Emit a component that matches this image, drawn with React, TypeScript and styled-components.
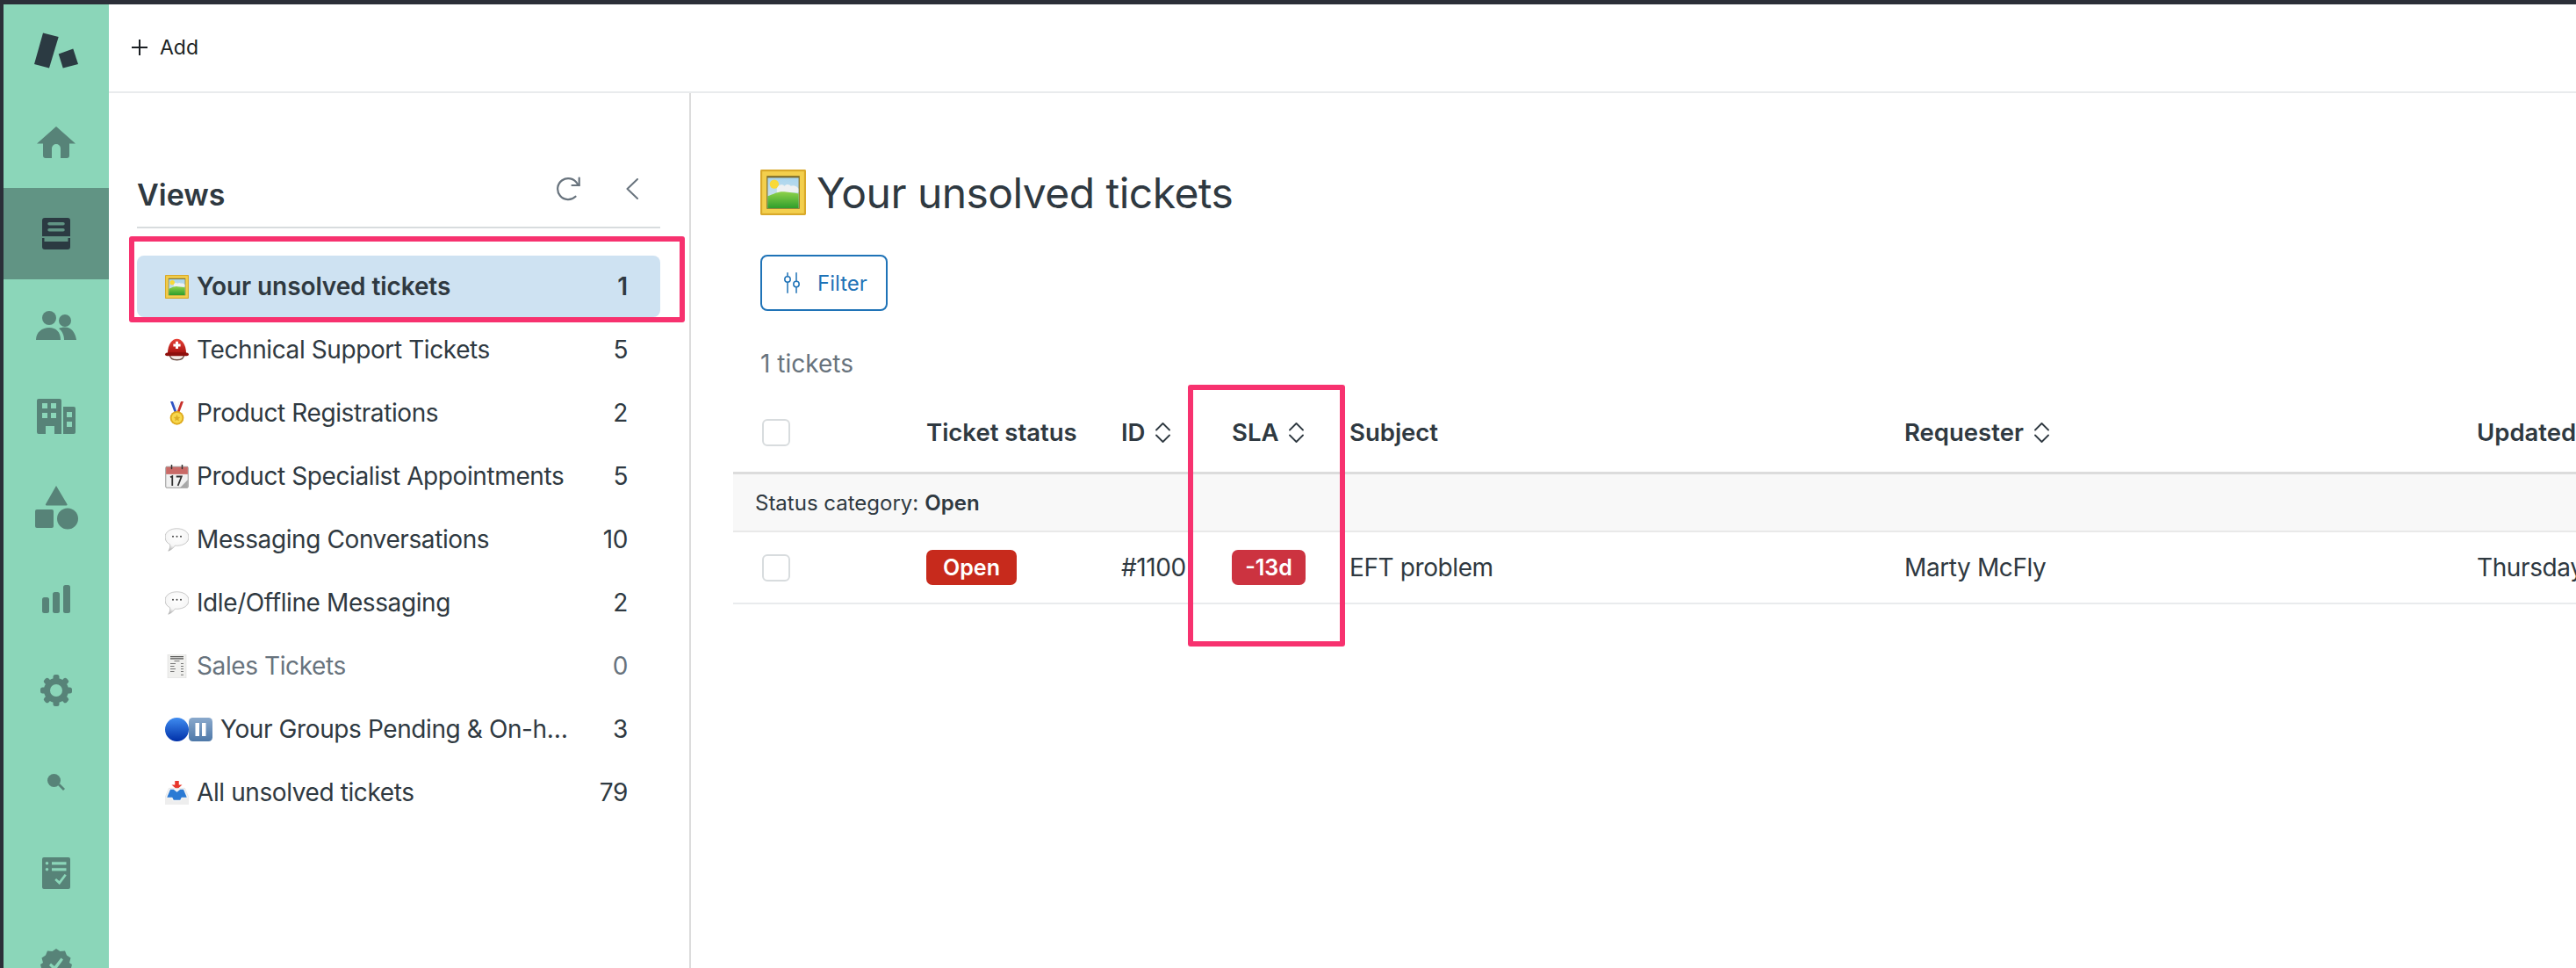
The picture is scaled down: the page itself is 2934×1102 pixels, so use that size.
import React from "react";
import styled, { createGlobalStyle } from "styled-components";

const Global = createGlobalStyle`
  html, body { margin: 0; padding: 0; background: #fff; overflow: hidden; }
  body { font-family: Inter, "Noto Sans", "Liberation Sans", sans-serif; color: #2f3941; -webkit-font-smoothing: antialiased; }
  * { box-sizing: border-box; }
`;

const Page = styled.div`
  width: 2934px; height: 1102px; display: flex; overflow: hidden;
  border-top: 5px solid #2b2f38; border-left: 4px solid #2b2f38; background: #fff;
`;
const Rail = styled.nav`
  width: 120px; flex: none; background: #8bd6b9; display: flex; flex-direction: column; color: #578378;
`;
const RailItem = styled.div<{ $active?: boolean; $logo?: boolean }>`
  height: ${(p) => (p.$logo ? 105 : 104)}px; flex: none; display: flex; align-items: center; justify-content: center;
  background: ${(p) => (p.$active ? "#619484" : "transparent")};
  color: ${(p) => (p.$logo ? "#2b3a42" : p.$active ? "#2b3a42" : "#578378")};
`;
const Content = styled.div`flex: 1; min-width: 0; display: flex; flex-direction: column;`;
const TopBar = styled.header`
  height: 101px; flex: none; display: flex; align-items: center; gap: 14px; padding: 0 0 2px 26px;
  border-bottom: 2px solid #e9ebed; font-size: 23px; font-weight: 400; color: #1b1f23;
`;
const Body = styled.div`flex: 1; min-height: 0; display: flex;`;
const Sidebar = styled.aside`
  width: 663px; flex: none; border-right: 2px solid #dcdcdc; padding: 80px 33px 0 32px;
`;
const ViewsHead = styled.div`
  height: 74px; display: flex; align-items: center; border-bottom: 2px solid #d8dcde; padding-bottom: 2px;
`;
const ViewsTitle = styled.h2`margin: 0; font-size: 34px; font-weight: 600; flex: 1; color: #2f3941;`;
const HeadIcons = styled.div`display: flex; align-items: center; gap: 52px; padding-right: 25px; color: #68737d; margin-top: -12px;`;
const ViewList = styled.div`position: relative; margin-top: 31px; display: flex; flex-direction: column; gap: 2px;`;
const ViewRow = styled.div<{ $selected?: boolean; $muted?: boolean }>`
  height: 70px; display: flex; align-items: center; padding: 0 37px 0 32px; border-radius: 8px;
  background: ${(p) => (p.$selected ? "#cee2f2" : "transparent")};
  color: ${(p) => (p.$muted ? "#68737d" : "#2f3941")};
  font-size: 28px; font-weight: ${(p) => (p.$selected ? 600 : 400)};
  letter-spacing: ${(p) => (p.$selected ? "-0.1px" : "-0.4px")};
`;
const EmojiSet = styled.span`display: flex; flex: none; margin-right: 9px;`;
const ViewName = styled.span`flex: 1; min-width: 0; white-space: nowrap; overflow: hidden; text-overflow: ellipsis;`;
const ViewCount = styled.span`width: 60px; flex: none; text-align: right;`;
const Callout = styled.div`
  position: absolute; border: 6px solid #f7326f; border-radius: 3px; pointer-events: none; z-index: 2;
`;
const SelectedCallout = styled(Callout)`left: -9px; top: -22px; width: 633px; height: 98px;`;
const SlaCallout = styled(Callout)`left: 518px; top: 6px; width: 179px; height: 298px;`;

const Main = styled.main`flex: 1; min-width: 0; overflow: hidden; padding: 81px 0 0 48px;`;
const Intro = styled.div`padding-left: 31px;`;
const Title = styled.h1`
  margin: 0; height: 64px; display: flex; align-items: center; gap: 12px;
  font-size: 48px; font-weight: 400; letter-spacing: -0.55px; color: #2f3941; white-space: nowrap;
`;
const FilterButton = styled.button`
  margin-top: 39px; width: 145px; height: 64px; display: flex; align-items: center; gap: 20px; padding: 0 0 0 25px;
  background: #fff; border: 2px solid #1f73b7; border-radius: 8px; color: #1f73b7;
  font: 400 24px Inter, sans-serif;
`;
const Count = styled.div`margin-top: 42px; height: 36px; line-height: 36px; font-size: 28px; color: #68737d;`;

const Table = styled.div`position: relative; width: 2099px;`;
const grid = `display: grid; grid-template-columns: 220px 222px 126px 134px 632px 652px 1fr; align-items: center;`;
const HeadRow = styled.div`
  ${grid} height: 108px; padding-top: 15px; border-bottom: 3px solid #dcdcdc;
  font-size: 27.5px; font-weight: 600; white-space: nowrap;
`;
const GroupRow = styled.div`
  height: 66px; display: flex; align-items: center; padding-left: 25px; background: #f8f8f8;
  border-bottom: 2px solid #e9e9e9; font-size: 24px; gap: 7px;
`;
const Strong = styled.strong`font-weight: 600;`;
const DataRow = styled.div`
  ${grid} height: 82px; border-bottom: 2px solid #e9ebed; font-size: 28px; letter-spacing: -0.4px; white-space: nowrap;
`;
const Check = styled.span`
  display: block; width: 32px; height: 31px; margin-left: 33px; border: 2px solid #d8dcde; border-radius: 6px; background: #fff;
`;
const HeadLabel = styled.span`display: flex; align-items: center; gap: 12px;`;
const Pill = styled.span<{ $bg: string; $w: number }>`
  display: flex; align-items: center; justify-content: center; height: 40px; width: ${(p) => p.$w}px;
  border-radius: 7px; background: ${(p) => p.$bg}; color: #fff; font-size: 25px; font-weight: 600; letter-spacing: 0;
`;

const Logo = () => (
  <svg width="50" height="41" viewBox="39 37 50 41" fill="currentColor">
    <path d="M49 37.5 66.7 42 56 77.5 39 73Z" />
    <path d="M66.7 61.4 83.3 55.4 89 73 71.7 77.5Z" />
  </svg>
);
const Home = () => (
  <svg width="44" height="36" viewBox="0 0 44 36" fill="currentColor">
    <path d="M22 0 44 19.5 37 19.5V33a3 3 0 0 1-3 3H27V25a5 5 0 0 0-10 0V36H10a3 3 0 0 1-3-3V19.5H0Z" />
  </svg>
);
const Inbox = () => (
  <svg width="32" height="36" viewBox="0 0 32 36" fill="currentColor" fillRule="evenodd">
    <path d="M3 0H29a3 3 0 0 1 3 3V21H0V3a3 3 0 0 1 3-3ZM8 5a1.500 1.500 0 0 0 0 3.500H24a1.500 1.500 0 0 0 0-3.500ZM8 12a1.500 1.500 0 0 0 0 3.500H24a1.500 1.500 0 0 0 0-3.500Z" />
    <path d="M0 23H2.500V27H29.500V23H32V33a3 3 0 0 1-3 3H3a3 3 0 0 1-3-3Z" />
  </svg>
);
const Users = () => (
  <svg width="46" height="33" viewBox="0 0 46 33" fill="currentColor">
    <circle cx="15" cy="8" r="8" />
    <path d="M0 33C0 24 7 19 15 19s13 5 13 14Z" />
    <circle cx="33" cy="11" r="7" />
    <path d="M26 20c2-1 4-1.500 7-1.500 7 0 12 6 13 14.500H32c0-5-2-10-6-13Z" />
  </svg>
);
const Building = () => (
  <svg width="44" height="40" viewBox="0 0 44 40" fill="currentColor" fillRule="evenodd">
    <path d="M2 0H26a2 2 0 0 1 2 2V40H20V31H10V40H2a2 2 0 0 1-2-2V2a2 2 0 0 1 2-2ZM6 5v6H12V5ZM16 5v6H22V5ZM6 16v6H12V16ZM16 16v6H22V16Z" />
    <path d="M30 9H42a2 2 0 0 1 2 2V38a2 2 0 0 1-2 2H30ZM34 15v6H40V15ZM34 26v6H40V26Z" />
  </svg>
);
const Shapes = () => (
  <svg width="49" height="50" viewBox="0 0 49 50" fill="currentColor">
    <path d="M24 0 36.500 21a1 1 0 0 1-1 1.500H13a1 1 0 0 1-1-1.500Z" />
    <rect x="0" y="27" width="21" height="21" rx="2" />
    <circle cx="37" cy="37.500" r="12" />
  </svg>
);
const Chart = () => (
  <svg width="32" height="32" viewBox="0 0 32 32" fill="currentColor">
    <rect x="0" y="14" width="8" height="18" rx="2.500" />
    <rect x="12" y="8" width="8" height="24" rx="2.500" />
    <rect x="24" y="0" width="8" height="32" rx="2.500" />
  </svg>
);
const Gear = () => (
  <svg width="36" height="36" viewBox="0 0 36 36" fill="currentColor">
    <circle cx="18" cy="18" r="10.500" fill="none" stroke="currentColor" strokeWidth="7" />
    {[0, 45, 90, 135, 180, 225, 270, 315].map((a) => (
      <rect key={a} x="14.500" y="0" width="7" height="8" rx="2.500" transform={`rotate(${a} 18 18)`} />
    ))}
  </svg>
);
const Search = () => (
  <svg width="20" height="19" viewBox="0 0 20 19" fill="currentColor">
    <circle cx="7.500" cy="7.500" r="7.500" />
    <path d="M12 13 14 11 20 17 18 19Z" />
  </svg>
);
const Checklist = () => (
  <svg width="32" height="36" viewBox="0 0 32 36" fill="currentColor" fillRule="evenodd">
    <path d="M2 0H30a2 2 0 0 1 2 2V34a2 2 0 0 1-2 2H2a2 2 0 0 1-2-2V2a2 2 0 0 1 2-2ZM5.500 5a1.800 1.800 0 1 0 0 3.600 1.800 1.800 0 0 0 0-3.600ZM5.500 12a1.800 1.800 0 1 0 0 3.600 1.800 1.800 0 0 0 0-3.600ZM11 5.200V8.400H27.500V5.200ZM11 12.200V15.400H27.500V12.200ZM27.800 20.500 25.600 19 19.500 27 16 24 14.300 26 19.800 31.300Z" />
  </svg>
);
const Badge = () => (
  <svg width="36" height="36" viewBox="0 0 36 36" fill="currentColor" fillRule="evenodd">
    <path d="M18 0 22.500 3 28 2.500 30 7.500 34.500 10.500 33 16 36 18 34.500 24 33 28 28 30 24 34 18 36 12 34 8 30 3 28 1.500 24 0 18 3 16 1.500 10.500 6 7.500 8 2.500 13.500 3ZM26 12.500 23.500 10.500 16 20 12 16.500 10 19 16.500 25.500Z" />
  </svg>
);
const Plus = () => (
  <svg width="18" height="18" viewBox="0 0 18 18" stroke="#1b1f23" strokeWidth="2" fill="none"><path d="M9 0V18M0 9H18" /></svg>
);
const Refresh = () => (
  <svg width="28" height="28" viewBox="0 0 28 28" fill="none" stroke="currentColor" strokeWidth="2.200" strokeLinecap="round" strokeLinejoin="round">
    <path d="M22.500 22.700A12 12 0 1 1 24.500 8L26.700 10" /><path d="M26.700 1.500V10H18.500" />
  </svg>
);
const ChevronLeft = () => (
  <svg width="14" height="24" viewBox="0 0 14 24" fill="none" stroke="currentColor" strokeWidth="2" strokeLinecap="round" strokeLinejoin="round"><path d="M13 1 1.500 12 13 23" /></svg>
);
const Sort = () => (
  <svg width="17" height="23" viewBox="0 0 17 23" fill="none" stroke="#2f3941" strokeWidth="1.800" strokeLinecap="round" strokeLinejoin="round" style={{ flex: "none" }}>
    <path d="M1 8.500 8.500 1 16 8.500" /><path d="M1 14.500 8.500 22 16 14.500" />
  </svg>
);
const Sliders = () => (
  <svg width="18" height="24" viewBox="0 0 18 24" fill="none" stroke="currentColor" strokeWidth="1.500" strokeLinecap="round" style={{ flex: "none" }}>
    <path d="M4 0.800V4M4 12V23.200M14 0.800V10M14 17V23.200" />
    <circle cx="4" cy="8" r="3.200" /><circle cx="14" cy="13.500" r="3.200" />
  </svg>
);

type EmojiKind = "frame" | "helmet" | "medal" | "calendar" | "bubble" | "receipt" | "circle" | "pause" | "inbox";
const Emoji = ({ kind, size = 27 }: { kind: EmojiKind; size?: number }) => {
  const uid = `${kind}-${size}`;
  return (
    <svg width={size} height={size} viewBox="0 0 36 36" style={{ flex: "none" }}>
      {kind === "frame" && (
        <>
          <defs>
            <linearGradient id={`${uid}-s`} x1="0" y1="0" x2="0" y2="1"><stop offset="0" stopColor="#a9d5ee" /><stop offset="1" stopColor="#dbe7ea" /></linearGradient>
            <linearGradient id={`${uid}-g`} x1="0" y1="0" x2="0" y2="1"><stop offset="0" stopColor="#8fd24a" /><stop offset="1" stopColor="#2f9e2c" /></linearGradient>
          </defs>
          <rect x="0" y="0" width="36" height="36" rx="1" fill="#d9a92a" />
          <rect x="1.500" y="1.500" width="33" height="33" fill="#f3cf4d" />
          <rect x="5" y="5" width="26" height="26" fill="#7a6a2a" />
          <rect x="5.800" y="6.500" width="24.400" height="24" fill={`url(#${uid}-s)`} />
          <circle cx="11" cy="11.500" r="3.600" fill="#f9d938" />
          <path d="M13 15c1-3 4-4 6-2 2-2 4-1 5 0 2-1 5 0 6 2v3H13Z" fill="#eef1f2" />
          <path d="M5.800 21c5-2 9-4 13-3.500 4 .5 8 1 11.400 1.500V30.500H5.800Z" fill={`url(#${uid}-g)`} />
        </>
      )}
      {kind === "helmet" && (
        <>
          <path d="M7 24c0 6 4 9 11 9s11-3 11-9" fill="#f4ece6" stroke="#6d5248" strokeWidth="1.800" />
          <defs><linearGradient id={`${uid}-h`} x1="0" y1="0" x2="0" y2="1"><stop offset="0" stopColor="#e8443a" /><stop offset="1" stopColor="#a81310" /></linearGradient></defs>
          <path d="M4 23C4 9 11 1 18 1s14 8 14 22Z" fill={`url(#${uid}-h)`} />
          <path d="M0 24.500c0-2 3-3 5-3h26c2 0 5 1 5 3s-3 2.500-5 2.500H5c-2 0-5-.5-5-2.500Z" fill="#8e100d" />
          <path d="M16 5h4v3.500h3.500v4H20V16h-4v-3.500h-3.500v-4H16Z" fill="#fff" />
        </>
      )}
      {kind === "medal" && (
        <>
          <path d="M8 0h4l6 16h-4Z" fill="#2f53c4" />
          <path d="M28 0h-4l-6 16h4Z" fill="#c8312c" />
          <path d="M13 0h2.500l3.500 9-1.800 3.500Z" fill="#f4f4f4" />
          <path d="M23 0h-2.500L17.500 9l1.300 3Z" fill="#f4f4f4" />
          <circle cx="18" cy="25" r="10.500" fill="#dfab1e" />
          <circle cx="18" cy="25" r="8" fill="#f7d84e" />
          <path d="M18 20l1.500 3.500 3.500.4-2.600 2.400.8 3.700-3.200-1.900-3.200 1.900.8-3.700-2.600-2.400 3.500-.4Z" fill="#dcae26" />
        </>
      )}
      {kind === "calendar" && (
        <>
          <rect x="1" y="3" width="34" height="32" rx="1.500" fill="#f1f1f1" stroke="#777" strokeWidth="1" />
          <rect x="1.500" y="3.500" width="33" height="11" fill="#c96a67" />
          <path d="M10 0.500V6M26 0.500V6" stroke="#333" strokeWidth="2" strokeLinecap="round" />
          <path d="M8 19l3-1.500V32M17 18h8l-5.500 14" fill="none" stroke="#333" strokeWidth="2.400" />
          <path d="M23 34.500 34.500 23v11.500Z" fill="#a8a8a8" />
        </>
      )}
      {kind === "bubble" && (
        <>
          <defs><radialGradient id={`${uid}-b`} cx="0.500" cy="0.350" r="0.650"><stop offset="0" stopColor="#ffffff" /><stop offset="0.7" stopColor="#f6f6f6" /><stop offset="1" stopColor="#bcbcbc" /></radialGradient></defs>
          <path d="M18 1c10 0 18 5 18 13s-8 13-18 13c-1 0-2 0-3-.2C13 30 10 33 5 35c2-3 3-6 2.500-10C3 23 0 19 0 14 0 6 8 1 18 1Z" fill={`url(#${uid}-b)`} stroke="#a9a9a9" strokeWidth="0.800" />
          <circle cx="12" cy="13" r="1.300" fill="#3f3f3f" /><circle cx="18" cy="13" r="1.300" fill="#3f3f3f" /><circle cx="24" cy="13" r="1.300" fill="#3f3f3f" />
        </>
      )}
      {kind === "receipt" && (
        <>
          <path d="M4 0H32V36H4Z" fill="#f0f0ee" stroke="#d4d4d2" strokeWidth="0.600" />
          <path d="M8 3.500H28M8 6.500H28" stroke="#555" strokeWidth="1.800" />
          <path d="M14 10H22M8 14H16M24 14H28M8 18H14M24 18H28M8 22H16M24 22H28M8 26H14M24 26H28M24 31H28" stroke="#777" strokeWidth="1.400" />
        </>
      )}
      {kind === "circle" && (
        <>
          <defs><linearGradient id={`${uid}-c`} x1="0" y1="0" x2="0" y2="1"><stop offset="0" stopColor="#3f8cf0" /><stop offset="1" stopColor="#0030a8" /></linearGradient></defs>
          <circle cx="18" cy="18" r="18" fill={`url(#${uid}-c)`} />
        </>
      )}
      {kind === "pause" && (
        <>
          <defs><linearGradient id={`${uid}-p`} x1="0" y1="0" x2="0" y2="1"><stop offset="0" stopColor="#8aa9cc" /><stop offset="1" stopColor="#4e78a8" /></linearGradient></defs>
          <rect x="0" y="0" width="36" height="36" rx="6" fill={`url(#${uid}-p)`} />
          <rect x="10" y="8" width="6" height="20" fill="#fff" /><rect x="20" y="8" width="6" height="20" fill="#fff" />
        </>
      )}
      {kind === "inbox" && (
        <>
          <path d="M18 13 10 6h5V0h6v6h5Z" fill="#e8362b" />
          <path d="M6 11h24l6 14v11H0V25Z" fill="#f5f5f5" stroke="#cfcfcf" strokeWidth="0.500" />
          <path d="M8 13h5l5 4 5-4h5l5 12h-8l-2 4H13l-2-4H3Z" fill="#2b7ad4" />
          <path d="M0 26h10l2 5h12l2-5h10v10H0Z" fill="#eeeeee" />
        </>
      )}
    </svg>
  );
};

const views: { emoji: EmojiKind[]; name: string; count: number; selected?: boolean; muted?: boolean }[] = [
  { emoji: ["frame"], name: "Your unsolved tickets", count: 1, selected: true },
  { emoji: ["helmet"], name: "Technical Support Tickets", count: 5 },
  { emoji: ["medal"], name: "Product Registrations", count: 2 },
  { emoji: ["calendar"], name: "Product Specialist Appointments", count: 5 },
  { emoji: ["bubble"], name: "Messaging Conversations", count: 10 },
  { emoji: ["bubble"], name: "Idle/Offline Messaging", count: 2 },
  { emoji: ["receipt"], name: "Sales Tickets", count: 0, muted: true },
  { emoji: ["circle", "pause"], name: "Your Groups Pending & On-hold Tickets", count: 3 },
  { emoji: ["inbox"], name: "All unsolved tickets", count: 79 },
];

const railIcons = [Home, Inbox, Users, Building, Shapes, Chart, Gear, Search, Checklist, Badge];

export default function App() {
  return (
    <>
      <Global />
      <Page>
        <Rail>
          <RailItem $logo><Logo /></RailItem>
          {railIcons.map((Icon, i) => (
            <RailItem key={i} $active={i === 1}><Icon /></RailItem>
          ))}
        </Rail>
        <Content>
          <TopBar><Plus />Add</TopBar>
          <Body>
            <Sidebar>
              <ViewsHead>
                <ViewsTitle>Views</ViewsTitle>
                <HeadIcons><Refresh /><ChevronLeft /></HeadIcons>
              </ViewsHead>
              <ViewList>
                <SelectedCallout />
                {views.map((v) => (
                  <ViewRow key={v.name} $selected={v.selected} $muted={v.muted}>
                    <EmojiSet>{v.emoji.map((e) => <Emoji key={e} kind={e} />)}</EmojiSet>
                    <ViewName>{v.name}</ViewName>
                    <ViewCount>{v.count}</ViewCount>
                  </ViewRow>
                ))}
              </ViewList>
            </Sidebar>
            <Main>
              <Intro>
                <Title><Emoji kind="frame" size={52} />Your unsolved tickets</Title>
                <FilterButton><Sliders />Filter</FilterButton>
                <Count>1 tickets</Count>
              </Intro>
              <Table>
                <SlaCallout />
                <HeadRow>
                  <Check />
                  <span>Ticket status</span>
                  <HeadLabel>ID <Sort /></HeadLabel>
                  <HeadLabel>SLA <Sort /></HeadLabel>
                  <span>Subject</span>
                  <HeadLabel>Requester <Sort /></HeadLabel>
                  <span>Updated</span>
                </HeadRow>
                <GroupRow>Status category: <Strong>Open</Strong></GroupRow>
                <DataRow>
                  <Check />
                  <span><Pill $bg="#c72a1c" $w={103}>Open</Pill></span>
                  <span>#1100</span>
                  <span><Pill $bg="#cc3340" $w={84}>-13d</Pill></span>
                  <span>EFT problem</span>
                  <span>Marty McFly</span>
                  <span>Thursday</span>
                </DataRow>
              </Table>
            </Main>
          </Body>
        </Content>
      </Page>
    </>
  );
}
